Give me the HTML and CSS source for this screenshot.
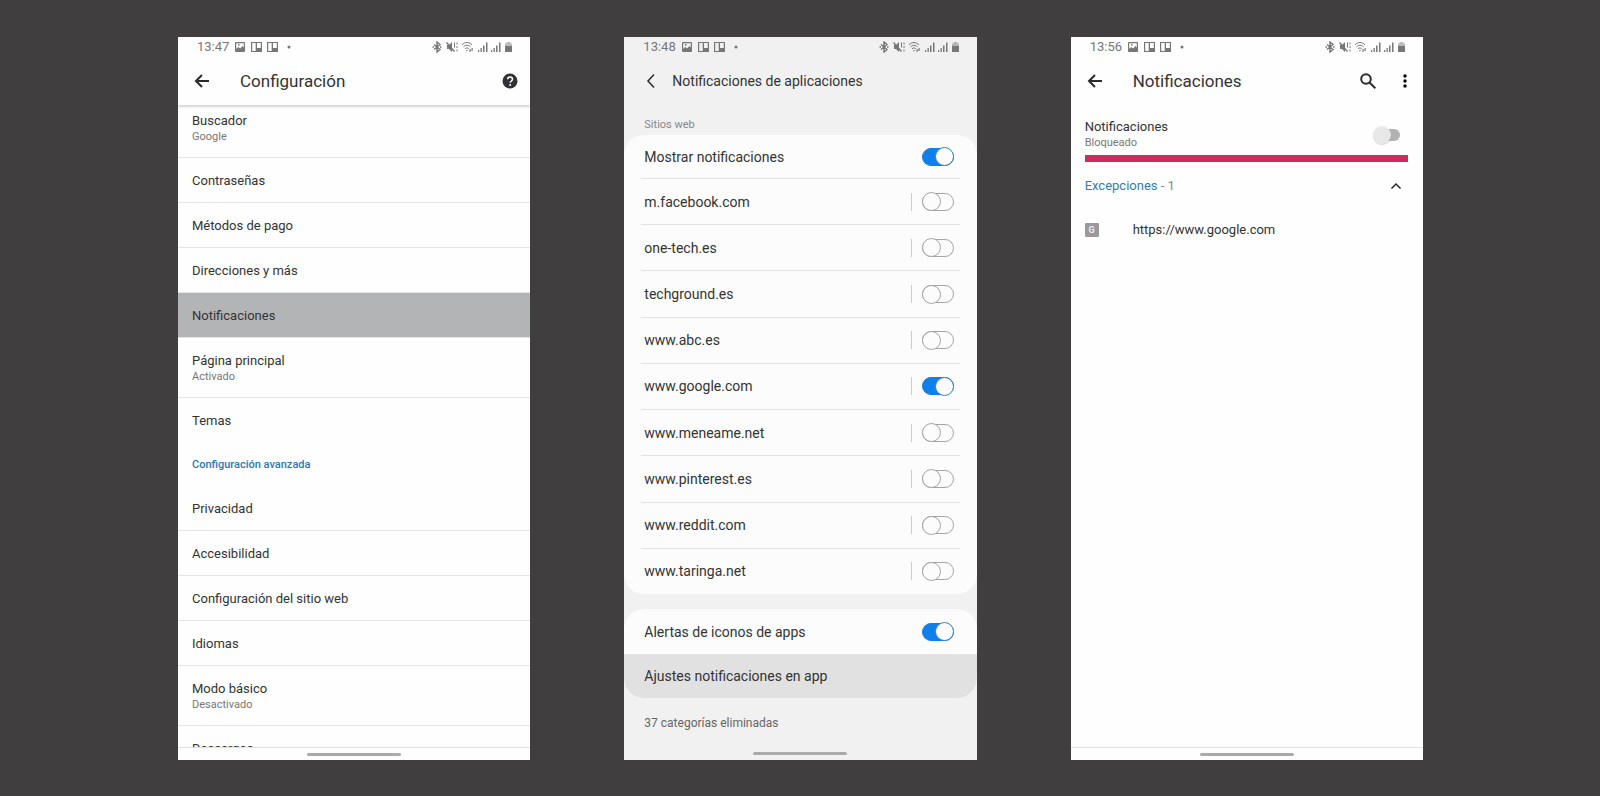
FILE: index.html
```html
<!DOCTYPE html>
<html lang="es">
<head>
  <meta charset="utf-8">
  <title>Notificaciones</title>
  <link rel="stylesheet" href="styles.css">
</head>
<body>

  <!-- status bar icons, shared by the three phones -->
  <svg class="defs" width="0" height="0">
    <symbol id="left-icons" viewBox="0 0 56 12">
      <path fill-rule="evenodd" d="M1 1h8a1 1 0 0 1 1 1v8a1 1 0 0 1-1 1H1a1 1 0 0 1-1-1V2a1 1 0 0 1 1-1zm.2 1.200v5.800l2-2 2 1.600 2.200-2.600 1.400 1.600V2.200zM3 3h1.500v1.500H3z"/>
      <path fill-rule="evenodd" d="M16 1h11v10H16zm1.200 1v8h3.500V2zm4.800 0v5h3.800V2z"/>
      <path fill-rule="evenodd" d="M32 1h11v10H32zm1.200 1v8h3.500V2zm4.800 0v5h3.800V2z"/>
      <circle cx="54" cy="6" r="1.500"/>
    </symbol>
    <symbol id="right-icons" viewBox="0 0 81 12">
      <path class="line bold" d="M2 3.500l6 5-3 2.500V1l3 2.500-6 5M.5 6h1.500M8 6h1.500"/>
      <path d="M15 4h2l3-3v10l-3-3h-2z"/>
      <path class="line bold" d="M14.500 1.500l8 9"/>
      <path class="line" d="M22.500 1.500v5M25 1.500v2M25 5v2M25 8.500v2"/>
      <path class="line" d="M30 3.800c3-3 7-3 10 0M31.500 5.800c2-2 5-2 7 0M33 7.800c1.300-1.200 2.600-1.200 3.800 0"/>
      <path d="M34 9h2l-1 1.500zM37.500 8h1.200v3h-1.200zM39.500 7h1.200v3h-1.200z"/>
      <path d="M46 9h1.200v2H46zM48.500 7h1.300v4h-1.300zM51 4.500h1.500V11H51zM54 1.500h1.500V11H54z"/>
      <path d="M59 9h1.200v2H59zM61.500 7h1.300v4h-1.300zM64 4.500h1.500V11H64zM67 1.500h1.500V11H67z"/>
      <path opacity=".5" d="M73 2.500h1.500V1h4v1.500H80V5h-7z"/>
      <path d="M73 5h7v6h-7z"/>
    </symbol>
    <symbol id="back" viewBox="0 0 16 16">
      <path class="stroke" d="M15 8H2M8 2L2 8l6 6"/>
    </symbol>
  </svg>

  <main class="phones">

    <section class="phone">
      <div class="status">
        <span class="time">13:47</span>
        <svg class="left-icons"><use href="#left-icons"/></svg>
        <svg class="right-icons"><use href="#right-icons"/></svg>
      </div>
      <header class="toolbar shadow">
        <button class="icon-btn" aria-label="Atrás"><svg width="16" height="16"><use href="#back"/></svg></button>
        <h1>Configuración</h1>
        <button class="icon-btn" aria-label="Ayuda">
          <svg width="16" height="16" viewBox="0 0 16 16">
            <circle cx="8" cy="8" r="7.500" fill="#303134"/>
            <path d="M5.700 6.300c0-3 4.800-3 4.800 0C10.500 8 8.200 8 8.200 9.800" fill="none" stroke="#fff" stroke-width="1.500"/>
            <circle cx="8.200" cy="12" r="1" fill="#fff"/>
          </svg>
        </button>
      </header>
      <nav class="settings">
        <a class="item" href="#">Buscador<small>Google</small></a>
        <a class="item" href="#">Contraseñas</a>
        <a class="item" href="#">Métodos de pago</a>
        <a class="item" href="#">Direcciones y más</a>
        <a class="item selected" href="#">Notificaciones</a>
        <a class="item" href="#">Página principal<small>Activado</small></a>
        <a class="item last" href="#">Temas</a>
        <h2>Configuración avanzada</h2>
        <a class="item" href="#">Privacidad</a>
        <a class="item" href="#">Accesibilidad</a>
        <a class="item" href="#">Configuración del sitio web</a>
        <a class="item" href="#">Idiomas</a>
        <a class="item" href="#">Modo básico<small>Desactivado</small></a>
        <a class="item" href="#">Descargas</a>
      </nav>
      <div class="gesture-bar lined"><span></span></div>
    </section>

    <section class="phone samsung">
      <div class="status">
        <span class="time">13:48</span>
        <svg class="left-icons"><use href="#left-icons"/></svg>
        <svg class="right-icons"><use href="#right-icons"/></svg>
      </div>
      <header class="toolbar">
        <button class="icon-btn" aria-label="Atrás">
          <svg width="16" height="16" viewBox="0 0 16 16"><path class="stroke thin" d="M10 1.500L4 8l6 6.500"/></svg>
        </button>
        <h1>Notificaciones de aplicaciones</h1>
      </header>
      <h2>Sitios web</h2>
      <div class="card sites">
        <div class="row main-row">
          <label for="show">Mostrar notificaciones</label>
          <input type="checkbox" class="switch" id="show" checked>
        </div>
        <div class="row split">
          <label for="facebook">m.facebook.com</label>
          <input type="checkbox" class="switch" id="facebook">
        </div>
        <div class="row split">
          <label for="onetech">one-tech.es</label>
          <input type="checkbox" class="switch" id="onetech">
        </div>
        <div class="row split">
          <label for="techground">techground.es</label>
          <input type="checkbox" class="switch" id="techground">
        </div>
        <div class="row split">
          <label for="abc">www.abc.es</label>
          <input type="checkbox" class="switch" id="abc">
        </div>
        <div class="row split">
          <label for="google">www.google.com</label>
          <input type="checkbox" class="switch" id="google" checked>
        </div>
        <div class="row split">
          <label for="meneame">www.meneame.net</label>
          <input type="checkbox" class="switch" id="meneame">
        </div>
        <div class="row split">
          <label for="pinterest">www.pinterest.es</label>
          <input type="checkbox" class="switch" id="pinterest">
        </div>
        <div class="row split">
          <label for="reddit">www.reddit.com</label>
          <input type="checkbox" class="switch" id="reddit">
        </div>
        <div class="row split">
          <label for="taringa">www.taringa.net</label>
          <input type="checkbox" class="switch" id="taringa">
        </div>
      </div>
      <div class="card extra">
        <div class="row">
          <label for="badges">Alertas de iconos de apps</label>
          <input type="checkbox" class="switch" id="badges" checked>
        </div>
        <a class="pressed" href="#">Ajustes notificaciones en app</a>
      </div>
      <p class="note">37 categorías eliminadas</p>
      <div class="gesture-bar"><span></span></div>
    </section>

    <section class="phone">
      <div class="status">
        <span class="time">13:56</span>
        <svg class="left-icons"><use href="#left-icons"/></svg>
        <svg class="right-icons"><use href="#right-icons"/></svg>
      </div>
      <header class="toolbar">
        <button class="icon-btn" aria-label="Atrás"><svg width="16" height="16"><use href="#back"/></svg></button>
        <h1>Notificaciones</h1>
        <button class="icon-btn" aria-label="Buscar">
          <svg width="16" height="16" viewBox="0 0 16 16"><circle class="stroke" cx="6" cy="6" r="4.800"/><path class="stroke" d="M9.500 9.500l5.800 5.800"/></svg>
        </button>
        <button class="icon-btn dots" aria-label="Más opciones">
          <svg width="4" height="16" viewBox="0 0 4 16"><circle cx="2" cy="3" r="1.700"/><circle cx="2" cy="8" r="1.700"/><circle cx="2" cy="13" r="1.700"/></svg>
        </button>
      </header>
      <div class="site-settings">
        <div class="permission">
          <label for="notifications">Notificaciones<small>Bloqueado</small></label>
          <input type="checkbox" class="android-switch" id="notifications">
        </div>
        <button class="exceptions">
          <span><b>Excepciones</b> - 1</span>
          <svg width="12" height="8" viewBox="0 0 12 8"><path class="stroke thin" d="M1.500 6.500L6 2l4.500 4.500"/></svg>
        </button>
        <a class="site" href="#"><span class="favicon">G</span>https://www.google.com</a>
      </div>
      <div class="gesture-bar lined"><span></span></div>
    </section>

  </main>

</body>
</html>
```
FILE: styles.css
```css
* {
  box-sizing: border-box;
}
body {
  margin: 0;
  background: #403e3f;
  font-family: Roboto, Arial, sans-serif;
  font-size: 13px;
  line-height: 16px;
  color: #333;
}
a {
  color: inherit;
  text-decoration: none;
}
h1, h2, p {
  margin: 0;
  font-weight: normal;
}
button {
  padding: 0;
  border: 0;
  background: none;
  font: inherit;
  color: inherit;
}
svg {
  display: block;
}
.defs {
  position: absolute;
}
.stroke {
  fill: none;
  stroke: #2b2b2b;
  stroke-width: 2;
}
.thin {
  stroke-width: 1.5;
}
.line {
  fill: none;
  stroke: #777;
  stroke-width: 1;
}
.bold {
  stroke-width: 1.4;
}
.phones {
  display: grid;
  grid-template-columns: repeat(3, 1fr);
  gap: 94px;
  height: 100vh;
  padding: 37px 177px 36px 178px;
}
.phone {
  display: flex;
  flex-direction: column;
  min-height: 0;
  overflow: hidden;
  background: #fefefe;
}

/* status bar and toolbar */
.status {
  display: flex;
  flex: none;
  align-items: center;
  height: 20px;
  padding: 0 17px 0 19px;
  font-size: 13px;
  color: #777;
  fill: #777;
}
.time {
  margin-right: 6px;
}
.left-icons {
  width: 56px;
  height: 12px;
}
.right-icons {
  width: 81px;
  height: 12px;
  margin-left: auto;
}
.toolbar {
  display: flex;
  flex: none;
  align-items: center;
  height: 48px;
  padding: 0 12px 0 16px;
}
.toolbar h1 {
  flex: 1;
  margin-left: 30px;
  font-size: 17px;
  line-height: 24px;
}
.shadow {
  position: relative;
  z-index: 1;
  background: #fefefe;
  box-shadow: 0 2px 2px rgba(0, 0, 0, 0.16);
}
.dots {
  margin-left: 27px;
  margin-right: 4px;
}

/* chrome settings */
.settings {
  flex: 1;
  min-height: 0;
  margin-top: -7px;
  overflow: hidden;
}
.item {
  display: block;
  padding: 15px 14px 13px;
  border-bottom: 1px solid #e2e4e6;
}
.item small, .permission small {
  display: block;
  font-size: 11px;
  line-height: 15px;
  color: #777;
}
.selected {
  background: #b3b4b6;
}
.last {
  border-color: transparent;
}
.settings h2 {
  padding: 14px 14px 13px;
  font-size: 11px;
  font-weight: 500;
  color: #2a78b5;
}
.gesture-bar {
  display: flex;
  flex: none;
  justify-content: center;
  align-items: center;
  height: 13px;
}
.gesture-bar span {
  width: 94px;
  height: 3px;
  border-radius: 2px;
  background: #aaa;
}
.lined {
  border-top: 1px solid #e2e2e2;
}

/* samsung settings */
.samsung {
  background: #f1f1f1;
  font-size: 14px;
}
.samsung .toolbar {
  padding-left: 20px;
}
.samsung h1 {
  margin-left: 12px;
  font-size: 14px;
}
.samsung h2 {
  padding: 12px 20px 2px;
  font-size: 11px;
  color: #888;
}
.card {
  display: flex;
  flex-direction: column;
  overflow: hidden;
  border-radius: 20px;
  background: #fcfcfc;
}
.sites {
  flex: 1;
}
.row {
  display: flex;
  flex: 1;
  align-items: center;
  margin: 0 17px;
  padding: 0 6px 0 3px;
  border-bottom: 1px solid #e3e3e3;
}
.row:last-child, .extra .row {
  border-bottom: 0;
}
.row label {
  flex: 1;
  line-height: 18px;
}
.main-row {
  flex: none;
  height: 44px;
}
.extra {
  flex: none;
  margin-top: 15px;
}
.extra .row {
  height: 45px;
  flex: none;
}
.pressed {
  padding: 14px 20px;
  background: #e1e1e1;
}
.note {
  padding: 17px 20px 16px;
  font-size: 12px;
  color: #666;
}
.switch {
  appearance: none;
  display: flex;
  align-items: center;
  width: 32px;
  height: 18px;
  margin: 0;
  border: 1px solid #a5a5a5;
  border-radius: 9px;
}
.switch::before {
  content: "";
  flex: none;
  width: 19px;
  height: 19px;
  margin-left: -1px;
  box-sizing: border-box;
  border: 1px solid #a5a5a5;
  border-radius: 50%;
  background: #fcfcfc;
}
.switch:checked {
  justify-content: flex-end;
  border-color: #0f80ea;
  background: #0f80ea;
}
.switch:checked::before {
  margin-right: -1px;
  border-color: #3f83bd;
}
.split .switch {
  margin-left: 10px;
}
.split label {
  border-right: 1px solid #ccc;
}

/* site permission */
.site-settings {
  flex: 1;
  padding: 15px 15px 0 14px;
}
.permission {
  display: flex;
  justify-content: space-between;
  align-items: center;
  height: 35px;
  padding: 0 8px 6px 0;
}
.android-switch {
  appearance: none;
  display: flex;
  align-items: center;
  width: 22px;
  height: 12px;
  margin: 0;
  border-radius: 6px;
  background: #b2b2b2;
}
.android-switch::before {
  content: "";
  flex: none;
  width: 18px;
  height: 18px;
  margin-left: -5px;
  border-radius: 50%;
  background: #e8e8e8;
  box-shadow: 0 1px 1px rgba(0, 0, 0, 0.15);
}
.exceptions {
  display: flex;
  justify-content: space-between;
  align-items: center;
  width: 100%;
  height: 55px;
  padding: 0 6px 0 0;
  border-top: 7px solid #cc2c5c;
  color: #888;
}
.exceptions b {
  font-weight: normal;
  color: #2f7fb3;
}
.site {
  display: flex;
  align-items: center;
  height: 40px;
}
.favicon {
  width: 14px;
  height: 14px;
  margin-right: 34px;
  border-radius: 1px;
  background: #9a9a9a;
  font-size: 9px;
  font-weight: bold;
  line-height: 14px;
  text-align: center;
  color: #eee;
}
```
